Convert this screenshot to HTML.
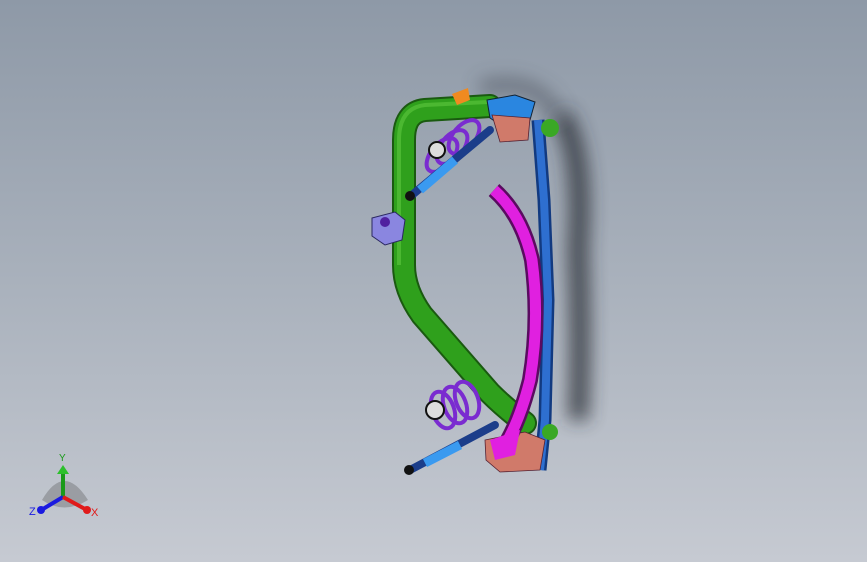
<!DOCTYPE html>
<html><head><style>
html,body{margin:0;padding:0}
body{width:867px;height:562px;overflow:hidden;background:linear-gradient(180deg,#8e99a7 0%,#a9b1bc 50%,#c6cad2 100%);font-family:"Liberation Sans",sans-serif}
</style></head><body>
<svg width="867" height="562" style="position:absolute;left:0;top:0">
<defs>
<filter id="b" filterUnits="userSpaceOnUse" x="0" y="0" width="867" height="562"><feGaussianBlur stdDeviation="9"/></filter>
</defs>
<!-- shadow -->
<path d="M560 115 Q585 150 578 250 Q582 350 578 420" stroke="#2a2e35" stroke-width="20" fill="none" filter="url(#b)" opacity="0.8"/>
<path d="M480 88 Q540 75 558 118" stroke="#3a3f48" stroke-width="14" fill="none" filter="url(#b)" opacity="0.5"/>
<!-- green tube -->
<path d="M490 106 L425 110 Q404 112 404 140 L404 265 Q404 290 422 315 L490 393 Q505 408 525 423" stroke="#1a5a10" stroke-width="24" fill="none" stroke-linecap="round"/>
<path d="M490 106 L425 110 Q404 112 404 140 L404 265 Q404 290 422 315 L490 393 Q505 408 525 423" stroke="#2fa01c" stroke-width="20" fill="none" stroke-linecap="round"/>
<path d="M488 102 L425 105 Q399 108 399 140 L399 265" stroke="#57c23a" stroke-width="4" fill="none" opacity="0.7"/>
<!-- blue rail -->
<path d="M538 120 L544 200 L548 300 L545 420 L540 470" stroke="#123a80" stroke-width="13" fill="none"/>
<path d="M538 120 L544 200 L548 300 L545 420 L540 470" stroke="#2e6fd0" stroke-width="8" fill="none"/>
<!-- top bracket -->
<path d="M487 100 L515 95 L535 102 L530 120 L505 128 L490 118 Z" fill="#2a86e0" stroke="#123" stroke-width="1"/>
<path d="M492 115 L530 118 L528 140 L500 142 Z" fill="#d07a6a" stroke="#523" stroke-width="0.8"/>
<circle cx="550" cy="128" r="9" fill="#3aa825"/>
<path d="M452 94 L468 88 L470 100 L457 105Z" fill="#f08a20"/>
<!-- bottom bracket -->
<path d="M485 440 L525 432 L545 440 L540 470 L500 472 L486 460Z" fill="#d07a6a" stroke="#523" stroke-width="0.8"/>
<circle cx="550" cy="432" r="8" fill="#3aa825"/>
<!-- magenta arm -->
<path d="M494 190 Q522 215 532 260 Q540 320 530 380 Q520 420 505 445" stroke="#5a0b60" stroke-width="16" fill="none"/>
<path d="M494 190 Q522 215 532 260 Q540 320 530 380 Q520 420 505 445" stroke="#e020e0" stroke-width="11" fill="none"/>
<path d="M490 440 L520 430 L515 455 L495 460Z" fill="#e020e0"/>
<!-- springs -->
<g stroke="#7a2bd0" stroke-width="4" fill="none">
<ellipse cx="452" cy="147" rx="11" ry="20" transform="rotate(40 452 147)"/>
<ellipse cx="464" cy="137" rx="11" ry="20" transform="rotate(40 464 137)"/>
<ellipse cx="442" cy="155" rx="11" ry="20" transform="rotate(40 442 155)"/>
<ellipse cx="455" cy="405" rx="11" ry="19" transform="rotate(-20 455 405)"/>
<ellipse cx="467" cy="400" rx="11" ry="19" transform="rotate(-20 467 400)"/>
<ellipse cx="443" cy="410" rx="11" ry="19" transform="rotate(-20 443 410)"/>
</g>
<circle cx="437" cy="150" r="8" fill="#ddd" stroke="#111" stroke-width="2"/>
<circle cx="435" cy="410" r="9" fill="#ddd" stroke="#111" stroke-width="2"/>
<!-- shocks -->
<path d="M490 130 L412 195" stroke="#1b3d8a" stroke-width="8" stroke-linecap="round"/>
<path d="M455 160 L420 190" stroke="#3a9af0" stroke-width="9"/>
<path d="M495 425 L410 470" stroke="#1b3d8a" stroke-width="8" stroke-linecap="round"/>
<path d="M460 445 L425 463" stroke="#3a9af0" stroke-width="9"/>
<circle cx="409" cy="470" r="5" fill="#111"/>
<circle cx="410" cy="196" r="5" fill="#111"/>
<!-- mount -->
<path d="M372 218 L395 212 L405 220 L402 240 L385 245 L372 236Z" fill="#8a86e0" stroke="#2a2860" stroke-width="1"/>
<circle cx="385" cy="222" r="5" fill="#5020a0"/>
<!-- triad -->
<path d="M42 500 Q64 462 88 500 Q64 515 42 500Z" fill="#555" opacity="0.35"/>
<line x1="63" y1="497" x2="63" y2="472" stroke="#1a9a1a" stroke-width="4"/>
<path d="M57 474 L63 465 L69 474Z" fill="#2cc02c"/>
<line x1="63" y1="497" x2="43" y2="509" stroke="#1a1ae0" stroke-width="4"/>
<circle cx="41" cy="510" r="4" fill="#1a1ae0"/>
<line x1="63" y1="497" x2="85" y2="509" stroke="#e01a1a" stroke-width="4"/>
<circle cx="87" cy="510" r="4" fill="#e01a1a"/>
<text x="59" y="461" font-size="10" fill="#1a9a1a" font-family="Liberation Sans">Y</text>
<text x="29" y="515" font-size="11" fill="#1a1ae0" font-family="Liberation Sans">Z</text>
<text x="91" y="516" font-size="11" fill="#e01a1a" font-family="Liberation Sans">X</text>
</svg>
</body></html>
